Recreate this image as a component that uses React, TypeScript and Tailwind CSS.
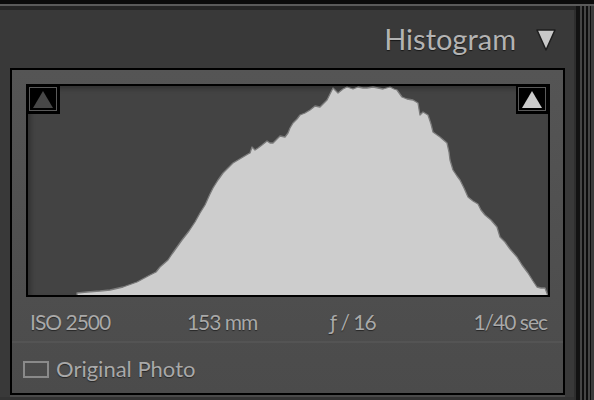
import React from "react";

// Lightroom style histogram panel

const font = { fontFamily: "Lato, 'Open Sans', sans-serif" };

const curve =
  "M77,296 L77,293 L87,292 L100,291 L110,290 L123,287 L137,282 L150,275 L156,272 L160,267 L168,260 L172,254 L177,247 L182,240 L189,231 L195,222 L200,213 L205,205 L210,194 L213,188 L218,180 L223,173 L228,168 L233,163 L238,160 L243,157 L248,154 L250,153 L252,147 L255,150 L258,148 L262,145 L267,141 L270,143 L273,143 L277,139 L280,136 L285,137 L288,133 L290,128 L293,123 L297,119 L300,115 L305,113 L310,110 L315,106 L320,107 L323,104 L327,100 L330,94 L333,88 L338,93 L343,89 L347,87 L353,89 L358,87 L363,88 L367,88 L373,87 L378,88 L383,89 L390,87 L394,89 L397,90 L402,97 L407,99 L413,100 L418,103 L420,115 L423,112 L428,115 L431,124 L433,132 L440,137 L447,143 L449,152 L450,160 L453,170 L457,176 L460,180 L464,188 L468,197 L473,201 L478,204 L481,210 L485,215 L491,220 L497,227 L500,237 L505,242 L510,249 L517,257 L522,265 L528,273 L533,281 L537,287 L541,288 L545,288 L548,296 Z";

function ClipIndicator({ light }: { light?: boolean }) {
  return (
    <div className="w-[33px] h-[29px] bg-black pt-[2px] pl-[2px] pr-[3px] pb-[3px]">
      <div className="w-full h-full border border-[#5a5a5a] bg-black flex items-center justify-center">
        <svg width="22" height="19" viewBox="0 0 22 19">
          <polygon points="11,1 21,18 1,18" fill={light ? "#cbcbcb" : "#474747"} />
        </svg>
      </div>
    </div>
  );
}

const stats = [
  { label: "ISO 2500", align: "text-left pl-[4px]" },
  { label: "153 mm", align: "text-center" },
  { label: "ƒ / 16", align: "text-center" },
  { label: "1/40 sec", align: "text-right pr-[2px]" },
];

export default function App() {
  return (
    <div className="w-[594px] h-[400px] bg-[#0b0b0b] flex flex-col overflow-hidden" style={font}>
      <div className="h-[4px] bg-[#0b0b0b]" />
      <div className="h-[2px] bg-[#5a5a5a]" />
      <div className="flex-1 flex min-h-0">
        <div className="w-[576px] flex flex-col">
          <div className="h-[4px] bg-[#262626]" />
          <div className="flex-1 bg-[#393939] flex flex-col border-r-2 border-[#2e2e2e]">
            {/* header */}
            <div className="h-[58px] flex justify-end items-start pt-[14px] pr-[17px]">
              <span className="text-[29px] leading-none text-[#b3b3b3] [text-shadow:0_1px_1px_rgba(0,0,0,0.6)]">
                Histogram
              </span>
              <svg width="22" height="24" viewBox="0 0 22 24" className="ml-[19px] mt-[4px]">
                <polygon points="2,2 20,2 11,22" fill="#c9c9c9" stroke="#1e1e1e" strokeWidth="1.5" strokeLinejoin="round" />
              </svg>
            </div>

            {/* box */}
            <div className="ml-[10px] w-[555px] h-[327px] border-2 border-black bg-gradient-to-b from-[#555555] to-[#4b4b4b] flex flex-col">
              <div className="pt-[14px] pl-[14px] pr-[13px]">
                <div className="relative w-[524px] h-[213px] border-2 border-black bg-[#434343] shadow-[inset_3px_3px_4px_rgba(0,0,0,0.25)]">
                  <svg className="absolute inset-0" width="520" height="209" viewBox="28 86 520 209">
                    <path d={curve} fill="#cdcdcd" stroke="#7b7b7b" strokeWidth="1.3" strokeLinejoin="round" />
                  </svg>
                  <div className="absolute -left-[1px] -top-[1px]">
                    <ClipIndicator />
                  </div>
                  <div className="absolute -right-[1px] -top-[1px]">
                    <ClipIndicator light />
                  </div>
                </div>
              </div>

              <div className="h-[44px] grid grid-cols-4 mx-[14px] pt-[14px]">
                {stats.map((s) => (
                  <span
                    key={s.label}
                    className={`${s.align} text-[21px] leading-none tracking-[-1px] text-[#a9a9a9] [text-shadow:0_1px_1px_rgba(0,0,0,0.5)]`}
                  >
                    {s.label}
                  </span>
                ))}
              </div>
              <div className="h-[2px] bg-[#545454]" />

              <div className="flex-1 flex items-start pt-[15px] pl-[11px]">
                <div className="flex items-center">
                  <div className="w-[26px] h-[17px] border-2 border-[#8a8a8a]" />
                  <span className="ml-[7px] text-[22px] leading-none text-[#a9a9a9] [text-shadow:0_1px_1px_rgba(0,0,0,0.5)]">
                    Original Photo
                  </span>
                </div>
              </div>
            </div>
            <div className="h-[2px] ml-[10px] w-[555px] bg-[#4a4a4a]" />
            <div className="flex-1 bg-[#333333]" />
          </div>
        </div>
        <div className="flex-1 flex">
          <div className="w-[4px] bg-[#121212]" />
          <div className="w-[2px] bg-[#454545]" />
          <div className="w-[2px] bg-[#0d0d0d]" />
          <div className="w-[2px] bg-[#454545]" />
          <div className="w-[2px] bg-[#0d0d0d]" />
          <div className="w-[2px] bg-[#454545]" />
          <div className="w-[1px] bg-[#0d0d0d]" />
          <div className="flex-1 bg-[#3c3c3c]" />
        </div>
      </div>
    </div>
  );
}
